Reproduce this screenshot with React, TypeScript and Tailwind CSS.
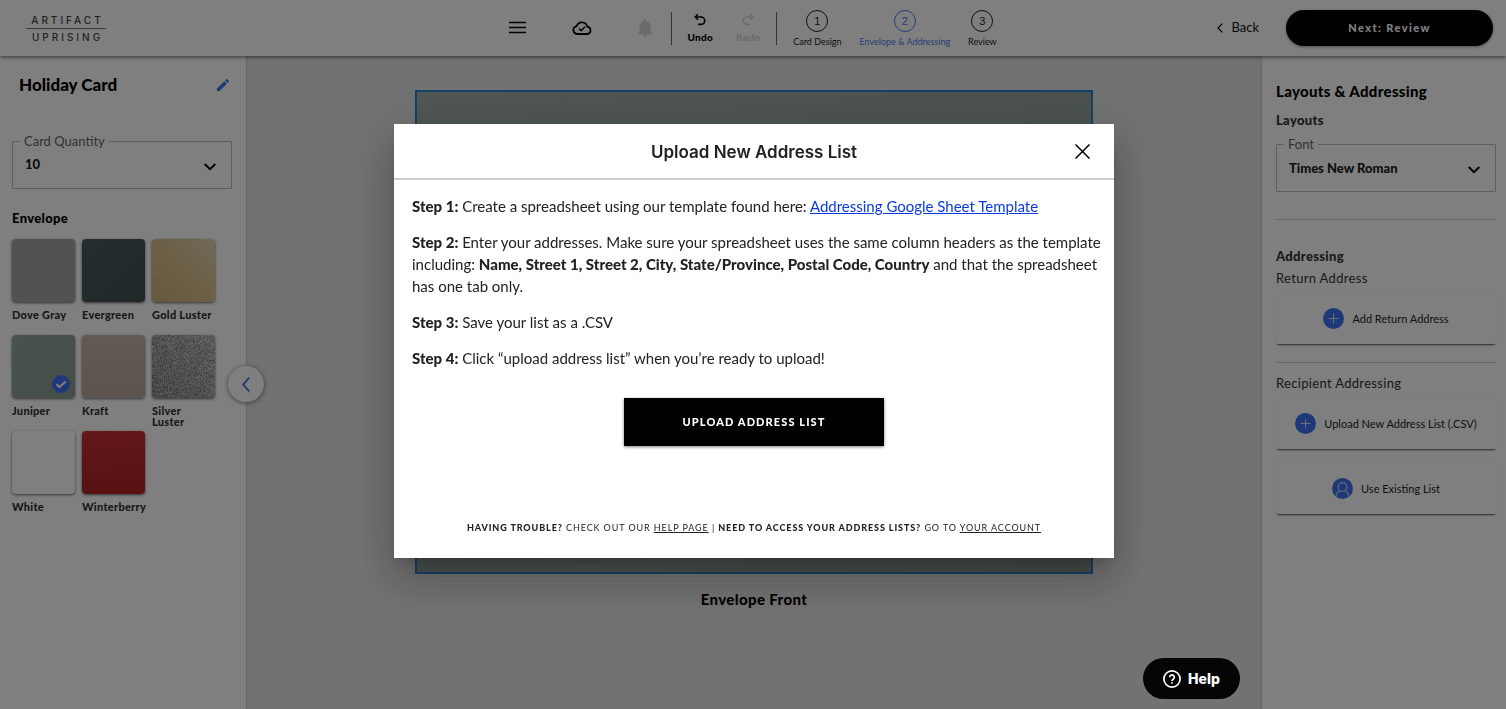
import { useState } from 'react'
import type { ReactNode } from 'react'
import clsx from 'clsx'
import { MdEdit, MdNotifications } from 'react-icons/md'

const SWATCHES = [
  { name: 'Dove Gray', color: 'bg-[#a3a5a8]' },
  { name: 'Evergreen', color: 'bg-linear-to-br from-[#4b5a5b] to-[#3f4f50]' },
  { name: 'Gold Luster', color: 'bg-linear-to-bl from-[#e4d6b4] via-[#dcc48c] to-[#d0b678]', grain: 0.06 },
  { name: 'Juniper', color: 'bg-linear-to-br from-[#92a59b] to-[#8a9c92]' },
  { name: 'Kraft', color: 'bg-linear-to-b from-[#c4b2a8] to-[#b8a79d]' },
  { name: 'Silver Luster', color: 'bg-linear-to-tr from-[#8c8c8c] to-[#c8c8c8]', grain: 0.4 },
  { name: 'White', color: 'bg-white' },
  { name: 'Winterberry', color: 'bg-linear-to-b from-[#ca2c30] to-[#b02024]', grain: 0.03 },
]

const STEPS = ['Card Design', 'Envelope & Addressing', 'Review']

function Grain({ id, opacity }: { id: string; opacity: number }) {
  return (
    <svg className="absolute inset-0 size-full" style={{ opacity }} aria-hidden="true">
      <filter id={id} colorInterpolationFilters="sRGB">
        <feTurbulence type="fractalNoise" baseFrequency="1.37" numOctaves="2" />
        <feColorMatrix values="1.4 1.4 0 0 -0.8  1.4 1.4 0 0 -0.8  1.4 1.4 0 0 -0.8  0 0 0 0 1" />
      </filter>
      <rect width="100%" height="100%" filter={`url(#${id})`} />
    </svg>
  )
}

function Logo() {
  return (
    <a href="#" className="flex w-20 flex-col items-center font-['Inter',sans-serif] text-[10px] leading-3 font-medium text-[#444]">
      <span className="pl-[3px] tracking-[3px]">ARTIFACT</span>
      <span className="my-[2px] h-px w-full bg-[#777]" />
      <span className="pl-[3px] tracking-[3px]">UPRISING</span>
    </a>
  )
}

function OutlinedSelect({ id, label, options }: { id: string; label: string; options: string[] }) {
  return (
    <div className="relative">
      <select
        id={id}
        className="block h-12 w-full appearance-none rounded-[1px] border border-[#bdbdbd] bg-white px-3 text-[13px] font-black text-[#222]"
      >
        {options.map(o => <option key={o}>{o}</option>)}
      </select>
      <label htmlFor={id} className="absolute -top-2 left-2 bg-white px-1 text-[13px] leading-4 text-[#666]">
        {label}
      </label>
      <svg className="pointer-events-none absolute top-5 right-4 h-3 w-3" viewBox="0 0 12 12" fill="none" stroke="#000" strokeWidth="2">
        <path d="M0.7 3 6 8.2 11.3 3" />
      </svg>
    </div>
  )
}

function ActionCard({ icon, children }: { icon: ReactNode; children: ReactNode }) {
  return (
    <button className="flex h-[51px] w-full items-center justify-center gap-2 rounded-[2px] bg-white text-[11px] tracking-normal text-[#222] shadow-[0_2px_2px_-1px_rgba(0,0,0,0.7),0_-1px_0_rgba(0,0,0,0.03)]">
      {icon}
      <span>{children}</span>
    </button>
  )
}

function PlusIcon() {
  return (
    <svg className="size-[21px]" viewBox="0 0 21 21" aria-hidden="true">
      <circle cx="10.5" cy="10.5" r="10.5" fill="#3e73f0" />
      <path d="M10.5 5.5v10M5.5 10.5h10" stroke="#d0dcf8" strokeWidth="1" />
    </svg>
  )
}

function PersonIcon() {
  return (
    <svg className="size-[21px]" viewBox="0 0 21 21" fill="none" aria-hidden="true">
      <circle cx="10.5" cy="10.5" r="10.5" fill="#3e73f0" />
      <g stroke="#b9cbf5" strokeWidth="1.3">
        <circle cx="10.5" cy="9" r="4.3" />
        <path d="M4.2 18.6c.3-3.2 1.7-4.9 3.7-5.9M16.8 18.6c-.3-3.2-1.7-4.9-3.7-5.9" />
      </g>
    </svg>
  )
}

function Header() {
  return (
    <header className="relative z-10 grid h-14 grid-cols-[1fr_auto_1fr] items-center bg-white shadow-[0_1px_4px_rgba(0,0,0,0.6)]">
      <div className="pl-[26px]">
        <Logo />
      </div>

      <div className="flex items-center">
        <button aria-label="Menu" className="mr-[46px]">
          <svg className="h-4 w-[17px]" viewBox="0 0 17 16" stroke="#000" strokeWidth="1.6">
            <path d="M0 2.5h17M0 7.5h17M0 12.5h17" />
          </svg>
        </button>
        <button aria-label="Saved" className="mr-[42px]">
          <svg className="h-[14px] w-5" viewBox="0 0 20 14" fill="none" stroke="#000" strokeWidth="1.8" strokeLinejoin="round">
            <path d="M5 13a4 4 0 0 1-.4-7.9A5.6 5.6 0 0 1 15.3 5.7 3.7 3.7 0 0 1 15.5 13Z" />
            <path d="M7 7.5l2.2 2.2L13 5.8" strokeWidth="1.5" />
          </svg>
        </button>
        <button aria-label="Notifications" disabled className="mr-[15px]">
          <MdNotifications className="size-[22px] text-[#d5d5d5]" />
        </button>

        <div className="flex h-[33px] items-center border-x border-[#666] px-3 text-[10px] font-black tracking-wide">
          <button className="flex w-8 flex-col items-center">
            <svg className="size-[14px]" viewBox="0 0 14 14" fill="none" stroke="#000" strokeWidth="1.6">
              <path d="M3 4h5a3.7 3.7 0 0 1 0 7.4H5" />
              <path d="M5 1.3 2.3 4 5 6.7" />
            </svg>
            <span className="mt-1 leading-3">Undo</span>
          </button>
          <button disabled className="ml-4 flex w-8 flex-col items-center text-[#d5d5d5]">
            <svg className="size-[14px]" viewBox="0 0 14 14" fill="none" stroke="currentColor" strokeWidth="1.6">
              <path d="M11 4H6a3.7 3.7 0 0 0 0 7.4h3" />
              <path d="M9 1.3 11.7 4 9 6.7" />
            </svg>
            <span className="mt-1 leading-3">Redo</span>
          </button>
        </div>

        <nav className="ml-4 flex gap-[18px] pt-[2px]">
          {STEPS.map((step, i) => (
            <a
              key={step}
              href="#"
              className={clsx('flex flex-col items-center text-[9px] leading-3', i === 1 ? 'text-[#4a7cf0]' : 'text-[#222]')}
            >
              <span className="flex size-[22px] items-center justify-center rounded-full border border-current font-['Liberation_Sans',sans-serif] text-[11px]">
                {i + 1}
              </span>
              <span className="mt-1">{step}</span>
            </a>
          ))}
        </nav>
      </div>

      <div className="flex items-center justify-end gap-[27px] pr-[13px]">
        <a href="#" className="flex items-center gap-2 text-[13px] text-[#111]">
          <svg className="h-[10px] w-[6px]" viewBox="0 0 6 10" fill="none" stroke="#000" strokeWidth="1.2">
            <path d="M5.3.7 1 5l4.3 4.3" />
          </svg>
          Back
        </a>
        <button className="h-9 w-[207px] rounded-full bg-black text-[11px] font-black tracking-[0.13em] text-white shadow-[0_1px_3px_rgba(0,0,0,0.4)]">
          Next: Review
        </button>
      </div>
    </header>
  )
}

function DesignPanel() {
  const [selected, setSelected] = useState('Juniper')

  return (
    <aside className="relative w-[247px] shrink-0 border-r border-[#cfcfcf] bg-white px-3">
      <div className="flex items-center justify-between pt-[17px] pl-[7px]">
        <h1 className="text-[17px] leading-6 font-black">Holiday Card</h1>
        <button aria-label="Edit name" className="mr-[3px] text-[#3e73f0]">
          <MdEdit className="size-4" />
        </button>
      </div>

      <div className="mt-11 mr-[2px]">
        <OutlinedSelect id="quantity" label="Card Quantity" options={['10', '20', '30']} />
      </div>

      <h2 className="mt-[19px] text-[13px] leading-5 font-black tracking-wide">Envelope</h2>
      <ul className="mt-[11px] grid grid-cols-[repeat(3,63px)] gap-x-[7px] gap-y-1">
        {SWATCHES.map((s, i) => (
          <li key={s.name}>
            <button className="block w-full text-left" onClick={() => setSelected(s.name)}>
              <span className={clsx('relative block h-[63px] overflow-hidden rounded-[4px] shadow-[0_1px_3px_rgba(0,0,0,0.6)]', s.color)}>
                {s.grain && <Grain id={`grain-${i}`} opacity={s.grain} />}
                {selected === s.name && (
                  <svg className="absolute right-[5px] bottom-[5px] size-[18px]" viewBox="0 0 18 18" fill="none">
                    <circle cx="9" cy="9" r="9" fill="#3e73f0" />
                    <path d="M4.5 9.3l3 2.8 6.2-5.6" stroke="#fff" strokeWidth="2" />
                  </svg>
                )}
              </span>
              <span className="mt-[7px] block h-[22px] text-[11px] leading-[11px] font-black tracking-wide text-[#333]">{s.name}</span>
            </button>
          </li>
        ))}
      </ul>

      <button
        aria-label="Collapse panel"
        className="absolute top-[310px] -right-[18px] flex size-9 items-center justify-center rounded-full bg-white shadow-[0_1px_5px_rgba(0,0,0,0.5)]"
      >
        <svg className="h-[15px] w-2" viewBox="0 0 8 15" fill="none" stroke="#3e73f0" strokeWidth="1.8">
          <path d="M7.3.7 1.2 7.5l6.1 6.8" />
        </svg>
      </button>
    </aside>
  )
}

function AddressingPanel() {
  return (
    <aside className="w-[245px] shrink-0 border-l border-[#cfcfcf] bg-white pt-[25px] pr-[10px] pl-[14px] text-[13px] leading-5 tracking-wide text-[#333]">
      <h2 className="text-[15px] font-black text-black">Layouts &amp; Addressing</h2>
      <h3 className="mt-[9px] font-black">Layouts</h3>
      <div className="mt-[14px] tracking-normal">
        <OutlinedSelect id="font" label="Font" options={['Times New Roman', 'Lato']} />
      </div>

      <hr className="mt-[27px] border-[#cfcfcf]" />
      <h3 className="mt-[26px] font-black">Addressing</h3>
      <p className="mt-[2px] mb-[5px]">Return Address</p>
      <ActionCard icon={<PlusIcon />}>Add Return Address</ActionCard>

      <hr className="mt-[18px] border-[#cfcfcf]" />
      <p className="mt-[10px] mb-[5px]">Recipient Addressing</p>
      <ActionCard icon={<PlusIcon />}>Upload New Address List (.CSV)</ActionCard>
      <div className="mt-[14px]">
        <ActionCard icon={<PersonIcon />}>Use Existing List</ActionCard>
      </div>
    </aside>
  )
}

function UploadDialog() {
  return (
    <div className="fixed inset-0 z-20 flex items-start justify-center bg-black/50 pt-[124px] pl-[2px]">
      <div
        role="dialog"
        aria-modal="true"
        aria-labelledby="dialog-title"
        className="w-full max-w-[720px] bg-white text-[#222] shadow-[0_11px_15px_-7px_rgba(0,0,0,0.2),0_24px_38px_3px_rgba(0,0,0,0.14),0_9px_46px_8px_rgba(0,0,0,0.12)]"
      >
        <div className="relative flex h-14 items-center justify-center border-b-2 border-[#ccc] pt-1">
          <h2 id="dialog-title" className="font-['Inter',sans-serif] text-[17px] font-semibold">Upload New Address List</h2>
          <button aria-label="Close" className="absolute top-5 right-6">
            <svg className="size-[15px]" viewBox="0 0 15 15" stroke="#000" strokeWidth="1.5">
              <path d="M.5.5l14 14M14.5.5l-14 14" />
            </svg>
          </button>
        </div>

        <div className="space-y-[14px] pt-[15px] pr-2 pl-[18px] text-[15px] leading-[22px]">
          <p>
            <b className="font-black">Step 1:</b> Create a spreadsheet using our template found here:{' '}
            <a href="#" className="text-[#0a3ce0] underline">Addressing Google Sheet Template</a>
          </p>
          <p>
            <b className="font-black">Step 2:</b> Enter your addresses. Make sure your spreadsheet uses the same column headers as the template including:{' '}
            <b className="font-black">Name, Street 1, Street 2, City, State/Province, Postal Code, Country</b> and that the spreadsheet has one tab only.
          </p>
          <p><b className="font-black">Step 3:</b> Save your list as a .CSV</p>
          <p><b className="font-black">Step 4:</b> Click “upload address list” when you’re ready to upload!</p>
        </div>

        <div className="mt-[29px] flex justify-center">
          <button className="h-12 w-[260px] bg-black text-[11px] font-black tracking-widest text-white uppercase shadow-[0_1px_3px_rgba(0,0,0,0.5)]">
            Upload Address List
          </button>
        </div>

        <p className="mt-[74px] pb-[22px] text-center text-[9px] leading-4 tracking-widest uppercase">
          <b className="font-black">Having trouble?</b> Check out our <a href="#" className="underline">Help page</a> |{' '}
          <b className="font-black">Need to access your address lists?</b> Go to <a href="#" className="underline">Your account</a>
        </p>
      </div>
    </div>
  )
}

export default function App() {
  return (
    <div className="flex min-h-screen flex-col bg-white font-['Lato',sans-serif] text-black">
      <Header />
      <div className="flex flex-1">
        <DesignPanel />
        <main className="flex min-w-0 flex-1 flex-col items-center bg-[#e4e4e4] px-10 pt-[34px]">
          <div className="aspect-7/5 w-full max-w-[678px] border-2 border-[#2b82d0] bg-linear-to-br from-[#a3afa9] to-[#8c9d94]" />
          <p className="mt-[15px] text-[15px] leading-5 font-black tracking-wide">Envelope Front</p>
        </main>
        <AddressingPanel />
      </div>

      <UploadDialog />

      <button className="fixed right-[266px] bottom-[10px] z-30 flex h-[41px] w-[97px] items-center justify-center gap-[7px] rounded-full bg-[#050505] font-['Inter',sans-serif] text-sm font-extrabold text-white">
        <svg className="size-[18px]" viewBox="0 0 18 18" fill="none" stroke="#fff" strokeWidth="1.7">
          <circle cx="9" cy="9" r="8.1" />
          <path d="M6.7 7.2a2.3 2.3 0 1 1 3.5 2c-.8.5-1.2.9-1.2 1.7M9 12.2v1.5" />
        </svg>
        Help
      </button>
    </div>
  )
}
